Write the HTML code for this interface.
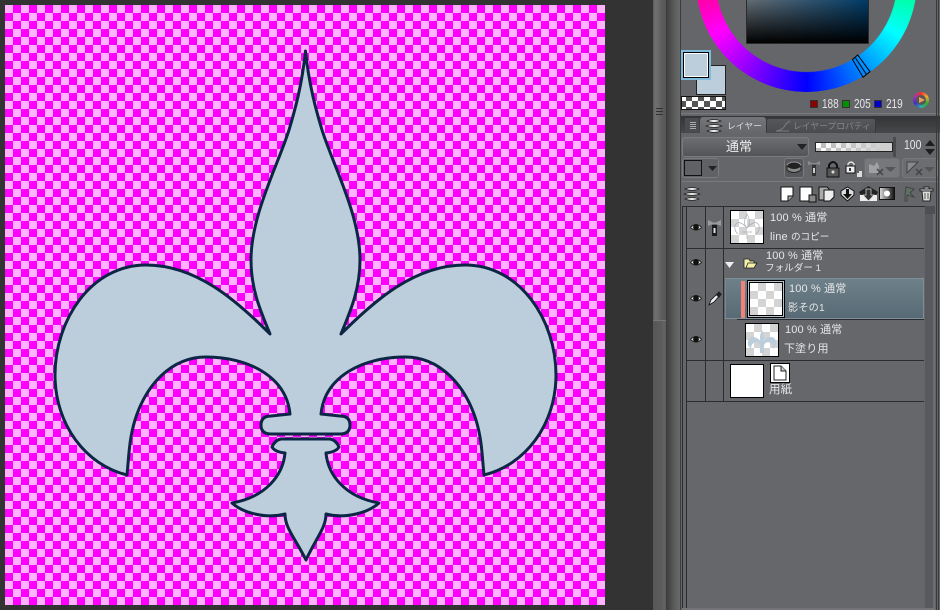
<!DOCTYPE html>
<html lang="ja"><head><meta charset="utf-8"><style>
*{box-sizing:border-box}
html,body{margin:0;padding:0}
body{width:940px;height:610px;overflow:hidden;background:#333;position:relative;font-family:"Liberation Sans","Noto Sans CJK JP",sans-serif;font-size:11px;color:#e6e6e6}
.a{position:absolute}
.t{position:absolute;white-space:nowrap;line-height:14px;letter-spacing:.15px}
.k{font-size:9.6px;letter-spacing:0}
.n{position:absolute;white-space:nowrap;line-height:14px;font-size:12.500px;transform:scaleX(.8);transform-origin:0 50%}
.ck{background:repeating-conic-gradient(#d4d4d4 0 25%,#fff 0 50%) 0 0/16px 16px;border:1px solid #000}
.ln{position:absolute;background:#2b2c2f}
.btn{position:absolute;border:1px solid #7a7b7e;border-radius:3px}
svg{position:absolute;overflow:visible}
</style></head><body>
<div class="a" style="left:5px;top:5px;width:600px;height:600px;background:repeating-conic-gradient(#f0f 0 25%,#ffb3ff 0 50%) 0 0/16px 16px"></div>
<svg style="left:0;top:0" width="610" height="610" viewBox="0 0 610 610">
<g fill="#bccddb" stroke="#0b2745" stroke-width="3" stroke-linejoin="round">
<path d="M305.500 51C309 85 316 110 322 130C333 165 360 215 360 260C360 290 350 312 341 334C375 300 415 265 465 265C520 265 556 320 556 375C556 425 525 465 484 475C482 455 482 440 476 420C465 385 440 357 405 357C365 357 325 375 321 414L340 416Q350 416 350 425Q350 434 340 434L271 434Q261 434 261 425Q261 416 271 416L290 414C286 375 246 357 206 357C171 357 146 385 135 420C129 440 129 455 127 475C86 465 55 425 55 375C55 320 91 265 146 265C196 265 236 300 270 334C261 312 251 290 251 260C251 215 278 165 289 130C295 110 302 85 305.500 51Z"/>
<path d="M281 439L330 439Q336 440 339 447Q336 452 326 453C328 475 345 497 379 503C368 513 345 519 326 514C326 528 316 538 306 560C295 538 285 528 285 514C266 519 243 513 232 503C266 497 283 475 285 453Q275 452 272 447Q275 440 281 439Z"/>
</g></svg>

<!-- splitter -->
<div class="a" style="left:653px;top:0;width:13px;height:610px;background:linear-gradient(90deg,#555 0,#6f6f6f 12%,#6b6b6b 40%,#5f5f5f 60%,#565656 100%)"></div>
<div class="a" style="left:653px;top:320px;width:13px;height:290px;background:linear-gradient(90deg,#575757,#5c5c5c 70%,#666 85%,#5a5a5a);border-top:1px solid #777"></div>
<div class="a" style="left:656px;top:107px;width:7px;height:8px;background:repeating-linear-gradient(0deg,#333 0 1px,transparent 1px 3px)"></div>
<div class="a" style="left:666px;top:0;width:14px;height:610px;background:linear-gradient(90deg,#3c3c3c,#5c5c5c 60%,#6a6a6a)"></div>
<!-- panel -->
<div class="a" style="left:680px;top:0;width:260px;height:610px;background:#65666a;border-left:1px solid #3c3c3e"></div>

<!-- colour wheel -->
<div class="a" style="left:696px;top:-129px;width:221px;height:221px;border-radius:50%;background:conic-gradient(#ff0,#0f0 60deg,#0ff 120deg,#00f 180deg,#f0f 240deg,#f00 300deg,#ff0 360deg);-webkit-mask:radial-gradient(circle closest-side,transparent 90px,#000 91px);mask:radial-gradient(circle closest-side,transparent 90px,#000 91px)"></div>
<div class="a" style="left:746px;top:-40px;width:123px;height:84px;border:1px solid #2b2b2b;background:linear-gradient(180deg,rgba(0,0,0,0),#000),linear-gradient(90deg,#bccddb,#0072c6)"></div>
<svg style="left:0;top:0" width="940" height="120"><path d="M852.500 59.500L857.700 55L870 71.700L863 77.300Z" fill="none" stroke="#000"/><path d="M855.500 58L866.500 74.500" stroke="#000" fill="none"/></svg>

<!-- swatches -->
<div class="a" style="left:696px;top:65px;width:30px;height:30px;background:#bccddb;border:1px solid #222"></div>
<div class="a" style="left:681px;top:50px;width:30px;height:30px;background:#7fbbdd"></div>
<div class="a" style="left:683px;top:52px;width:26px;height:26px;background:#bccddb;border:1px solid #000;box-shadow:inset 0 0 0 1px #fff"></div>
<div class="a" style="left:681px;top:96px;width:45px;height:14px;border:1px solid #111;background:repeating-conic-gradient(#555 0 25%,#fff 0 50%) -2px -2px/12px 12px"></div>

<!-- rgb -->
<div class="a" style="left:810px;top:100px;width:8px;height:8px;background:#8c0000;border:1px solid #333"></div>
<div class="n" style="left:822px;top:97px">188</div>
<div class="a" style="left:842px;top:100px;width:8px;height:8px;background:#009000;border:1px solid #333"></div>
<div class="n" style="left:854px;top:97px">205</div>
<div class="a" style="left:874px;top:100px;width:8px;height:8px;background:#0000d0;border:1px solid #333"></div>
<div class="n" style="left:886px;top:97px">219</div>
<div class="a" style="left:913px;top:92px;width:16px;height:16px;border-radius:50%;background:conic-gradient(#e33,#ea3,#3a3,#3aa,#33c,#a3a,#e33)"></div>
<div class="a" style="left:916px;top:95px;width:10px;height:10px;border-radius:50%;background:#555"></div>
<svg style="left:0;top:0" width="940" height="120"><path d="M919 97L925 100L919 103Z" fill="#e8a060"/></svg>

<!-- tabs -->
<div class="a" style="left:681px;top:113px;width:259px;height:1px;background:#7a7b7e"></div>
<div class="a" style="left:681px;top:116px;width:259px;height:17px;background:linear-gradient(#333436,#47484a)"></div>
<div class="a" style="left:685px;top:118px;width:14px;height:14px;background:#4b4c4f"></div>
<div class="a" style="left:690px;top:121px;width:6px;height:8px;background:repeating-linear-gradient(0deg,#aaa 0 1px,transparent 1px 2px)"></div>
<div class="a" style="left:700px;top:117px;width:66px;height:17px;background:linear-gradient(#74757a,#65666a);border-radius:3px 3px 0 0"></div>
<div class="a" style="left:766px;top:118px;width:110px;height:15px;background:linear-gradient(#56575a,#4a4b4d);border:1px solid #38393b;border-bottom:0;border-radius:3px 3px 0 0"></div>
<div class="t" style="left:727px;top:119px;color:#dcdcdc;font-size:8.800px;letter-spacing:0">レイヤー</div>
<div class="t" style="left:793px;top:119px;color:#85868a;font-size:8.800px;letter-spacing:0">レイヤープロパティ</div>
<svg style="left:775px;top:119px" width="16" height="14"><path d="M1 12Q7 11 9 8Q11 4 15 2M1 12H14" stroke="#7c7d80" fill="none"/></svg>
<svg style="left:705px;top:118px" width="18" height="16"><path d="M2 3Q9 0 16 3Q9 6 2 3ZM1 8Q9 5 17 8Q9 11 1 8ZM2 13Q9 10 16 13Q9 16 2 13Z" fill="#e8e8e8" stroke="#222" stroke-width=".7"/></svg>

<!-- blend -->
<div class="btn" style="left:682px;top:137px;width:127px;height:20px;background:linear-gradient(#6d6e71,#535457)"></div>
<div class="t" style="left:726px;top:139px;font-size:13px;line-height:16px;color:#eee">通常</div>
<svg style="left:797px;top:144px" width="10" height="6"><path d="M0 0H10L5 6Z" fill="#222"/></svg>
<div class="a" style="left:815px;top:142px;width:78px;height:10px;border:1px solid #222;background:linear-gradient(90deg,rgba(205,205,205,0),#cfcfcf 90%),repeating-conic-gradient(#bbb 0 25%,#fff 0 50%) 0 0/10px 10px"></div>
<div class="a" style="left:893px;top:137px;width:3px;height:20px;background:#4a4b4e"></div>
<div class="n" style="left:904px;top:138px;font-size:13px">100</div>
<svg style="left:924px;top:140px" width="12" height="16"><path d="M1 6H11L6 0ZM1 9H11L6 15Z" fill="#1e1e1e"/></svg>

<!-- row 2 -->
<div class="btn" style="left:682px;top:158px;width:37px;height:20px;background:#606164"></div>
<div class="a" style="left:684px;top:160px;width:18px;height:16px;background:#606266;border:1px solid #111"></div>
<svg style="left:708px;top:166px" width="9" height="5"><path d="M0 0H9L4.500 5Z" fill="#222"/></svg>
<div class="btn" style="left:784px;top:158px;width:20px;height:20px;background:#56575a"></div>
<svg style="left:786px;top:161px" width="16" height="14"><ellipse cx="8" cy="5" rx="7" ry="4" fill="#222" stroke="#999"/><path d="M1 5V9Q8 14 15 9V5Q8 10 1 5Z" fill="#888" stroke="#222"/></svg>
<svg style="left:807px;top:159px" width="14" height="18"><path d="M1 2L5 4H9L13 2V6L9 5H5L1 6Z" fill="#8a8b8d"/><path d="M5 6H9V17H5Z" fill="#333"/><path d="M6 9H8V14H6Z" fill="#ccc"/></svg>
<svg style="left:826px;top:160px" width="14" height="18"><path d="M3 8V5Q7 -1 11 5V8" fill="none" stroke="#111" stroke-width="2"/><rect x="1" y="8" width="12" height="9" fill="#555" stroke="#111"/><circle cx="7" cy="12" r="1.500" fill="#ddd"/></svg>
<svg style="left:845px;top:160px" width="18" height="18"><path d="M3 6V4Q6 0 9 4V6" fill="none" stroke="#eee" stroke-width="1.200"/><rect x="1" y="6" width="9" height="7" fill="#eee" stroke="#111"/><rect x="4" y="8" width="2" height="3" fill="#333"/><path d="M12 17V13H14V11H17V17Z" fill="#ddd"/></svg>
<div class="btn" style="left:864px;top:158px;width:36px;height:20px;background:#77787b;border-color:#6d6e71"></div>
<svg style="left:868px;top:161px" width="30" height="15"><path d="M1 3L6 5L9 1L11 5V12H1Z" fill="#a0a1a3"/><path d="M9 8L15 14M15 8L9 14" stroke="#444" stroke-width="1.500"/><path d="M17 6H28L22.500 11Z" fill="#555"/></svg>
<div class="btn" style="left:902px;top:158px;width:36px;height:20px;background:#6c6d70;border-color:#77787b"></div>
<svg style="left:906px;top:161px" width="30" height="15"><path d="M1 1H12L1 12Z" fill="#88898c" stroke="#444"/><path d="M10 8L16 14M16 8L10 14" stroke="#444" stroke-width="1.500"/><path d="M18 6H29L23.500 11Z" fill="#555"/></svg>

<div class="a" style="left:682px;top:181px;width:258px;height:1px;background:#7a7b7e"></div>

<!-- row 3 -->
<svg style="left:683px;top:186px" width="18" height="16"><path d="M2 3Q9 0 16 3Q9 6 2 3ZM1 8Q9 5 17 8Q9 11 1 8ZM2 13Q9 10 16 13Q9 16 2 13Z" fill="#e4e4e4" stroke="#222" stroke-width=".7"/></svg>
<svg style="left:780px;top:186px" width="15" height="16"><path d="M1 1H13V10L8 15H1Z" fill="#fff" stroke="#111"/><path d="M13 10H8V15" fill="#aaa" stroke="#111"/></svg>
<svg style="left:799px;top:186px" width="18" height="16"><path d="M1 1H13V15H1Z" fill="#fff" stroke="#111"/><rect x="10" y="9" width="7" height="7" fill="#888" stroke="#111"/></svg>
<svg style="left:818px;top:186px" width="18" height="16"><path d="M1 1H9L11 3V14H1Z" fill="#aaa" stroke="#111"/><path d="M6 4H16V11L12 15H6Z" fill="#eee" stroke="#111"/></svg>
<svg style="left:840px;top:186px" width="15" height="16"><path d="M7.500 1L14 5V9L7.500 15L1 9V5Z" fill="#ddd" stroke="#111"/><path d="M6 3H9V8H12L7.500 13L3 8H6Z" fill="#111"/></svg>
<svg style="left:858px;top:186px" width="21" height="16"><path d="M10.500 0L20 6L15 15H6L1 6Z" fill="#222"/><path d="M2 9H19V15H2Z" fill="#eee"/><path d="M8 3H13V9H16L10.500 15L5 9H8Z" fill="#333" stroke="#ddd" stroke-width=".7"/></svg>
<svg style="left:879px;top:187px" width="16" height="14"><defs><linearGradient id="g1"><stop offset="0" stop-color="#ddd"/><stop offset="1" stop-color="#111"/></linearGradient></defs><rect x=".5" y=".5" width="15" height="12" fill="url(#g1)" stroke="#111"/><circle cx="8" cy="6.500" r="3" fill="#fff"/></svg>
<svg style="left:899px;top:186px" width="16" height="16"><path d="M7 1L15 3L11 7L15 11L8 9V15H6V9Z" fill="#5e6f66" stroke="#444"/></svg>
<svg style="left:919px;top:186px" width="15" height="16"><path d="M1 3H14V5H1ZM5 3V1H10V3ZM3 5H12L11 15H4Z" fill="#ddd" stroke="#222"/><path d="M6 7V13M9 7V13" stroke="#555"/></svg>

<!-- list -->
<div class="a" style="left:686px;top:206px;width:238px;height:404px;background:#66676b"></div>
<div class="ln" style="left:682px;top:206px;width:1px;height:404px"></div>
<div class="ln" style="left:686px;top:206px;width:1px;height:404px"></div>
<div class="ln" style="left:682px;top:206px;width:243px;height:1px"></div>
<div class="ln" style="left:705px;top:206px;width:1px;height:195px"></div>
<div class="ln" style="left:723px;top:206px;width:1px;height:195px"></div>
<div class="ln" style="left:686px;top:248px;width:238px;height:1px"></div>
<div class="ln" style="left:686px;top:360px;width:238px;height:1px"></div>
<div class="ln" style="left:686px;top:401px;width:238px;height:1px"></div>
<div class="a" style="left:925px;top:206px;width:10px;height:404px;background:#58595c;border-right:2px solid #6c6d70"></div>
<div class="a" style="left:925px;top:206px;width:10px;height:8px;background:#4e4f52"></div>
<div class="a" style="left:936px;top:0;width:1px;height:610px;background:#38393b"></div>
<div class="a" style="left:938px;top:0;width:1px;height:610px;background:#38393b"></div>
<div class="a" style="left:682px;top:608px;width:253px;height:2px;background:#737478"></div>

<!-- selected row -->
<div class="a" style="left:725px;top:278px;width:199px;height:41px;background:linear-gradient(#6e8089,#586a75);border:1px solid #7d8e98;border-left-color:#77878f"></div>
<div class="ln" style="left:737px;top:319px;width:187px;height:1px"></div>
<div class="a" style="left:741px;top:281px;width:4px;height:37px;background:#f08078"></div>
<div class="a" style="left:747px;top:280px;width:38px;height:38px;border:1px solid #000;background:#b8c5cc"></div>
<div class="a ck" style="left:749px;top:282px;width:34px;height:34px"></div>

<!-- thumbs -->
<div class="a ck" style="left:730px;top:210px;width:34px;height:34px"></div>
<svg style="left:731px;top:211px" width="32" height="32" fill="none" stroke="#a8adb4" stroke-width=".7"><path d="M16 3Q21 12 16 17Q11 12 16 3ZM16 17Q8 8 4 14Q3 20 7 23M16 17Q24 8 28 14Q29 20 25 23M11 21H21M16 22V28"/></svg>
<div class="a ck" style="left:745px;top:323px;width:34px;height:34px"></div>
<svg style="left:746px;top:324px" width="32" height="32"><path d="M16 6Q19 12 17.500 17Q21 13 26 13Q31 15 30 21L27 25Q27 19 22 18Q18 19 18 22V29H14V22Q14 19 10 18Q5 19 5 25L2 21Q1 15 6 13Q11 13 14.500 17Q13 12 16 6Z" fill="#bccddb"/></svg>
<div class="a" style="left:730px;top:364px;width:34px;height:34px;background:#fff;border:1px solid #000"></div>
<svg style="left:770px;top:363px" width="20" height="20"><rect x=".5" y=".5" width="19" height="19" fill="#fff" stroke="#000"/><path d="M4 3H11L16 8V17H4Z" fill="#fff" stroke="#222"/><path d="M11 3V8H16" fill="#ccc" stroke="#222"/></svg>

<!-- labels -->
<div class="t" style="left:770px;top:211px">100 % 通常</div>
<div class="t" style="left:770px;top:230px">line <span class="k">のコピー</span></div>
<div class="t" style="left:766px;top:249px">100 % 通常</div>
<div class="t k" style="left:765px;top:262px">フォルダー 1</div>
<div class="t" style="left:789px;top:282px">100 % 通常</div>
<div class="t" style="left:788px;top:302px;font-size:10.200px">影その1</div>
<div class="t" style="left:785px;top:323px">100 % 通常</div>
<div class="t" style="left:784px;top:342px">下塗り用</div>
<div class="t" style="left:769px;top:383px;font-size:11.500px">用紙</div>

<!-- folder -->
<svg style="left:725px;top:262px" width="9" height="6"><path d="M0 0H9L4.500 6Z" fill="#eee"/></svg>
<svg style="left:743px;top:258px" width="15" height="11"><path d="M1 10V1H6L7 3H11V5H14L11 10Z" fill="#f4f0a8" stroke="#222" stroke-width=".8"/><path d="M3 10L5 5H14" fill="none" stroke="#222" stroke-width=".8"/></svg>

<!-- eyes -->
<svg style="left:690px;top:223px" width="12" height="9"><path d="M.5 4.500Q6 -1.500 11.500 4.500Q6 9.500 .5 4.500Z" fill="#eee" stroke="#222" stroke-width=".9"/><circle cx="6" cy="4.200" r="2.900" fill="#111"/></svg>
<svg style="left:690px;top:258px" width="12" height="9"><path d="M.5 4.500Q6 -1.500 11.500 4.500Q6 9.500 .5 4.500Z" fill="#eee" stroke="#222" stroke-width=".9"/><circle cx="6" cy="4.200" r="2.900" fill="#111"/></svg>
<svg style="left:690px;top:294px" width="12" height="9"><path d="M.5 4.500Q6 -1.500 11.500 4.500Q6 9.500 .5 4.500Z" fill="#eee" stroke="#222" stroke-width=".9"/><circle cx="6" cy="4.200" r="2.900" fill="#111"/></svg>
<svg style="left:690px;top:335px" width="12" height="9"><path d="M.5 4.500Q6 -1.500 11.500 4.500Q6 9.500 .5 4.500Z" fill="#eee" stroke="#222" stroke-width=".9"/><circle cx="6" cy="4.200" r="2.900" fill="#111"/></svg>
<!-- ruler icon -->
<svg style="left:708px;top:219px" width="14" height="18"><path d="M0 1L5 3.500H8L13 1V7L8 5H5L0 7Z" fill="#9a9b9d"/><path d="M4 6H9V17H4Z" fill="#1c1c1c"/><path d="M5.500 9H7.500V14H5.500Z" fill="#ddd"/></svg>
<!-- pen -->
<svg style="left:708px;top:291px" width="15" height="15"><path d="M1 14L3 9L11 1L13 3L6 11Z" fill="#eee" stroke="#111" stroke-width=".8"/><path d="M8 4L11 1L14 3L11 7Z" fill="#222"/></svg>
</body></html>
